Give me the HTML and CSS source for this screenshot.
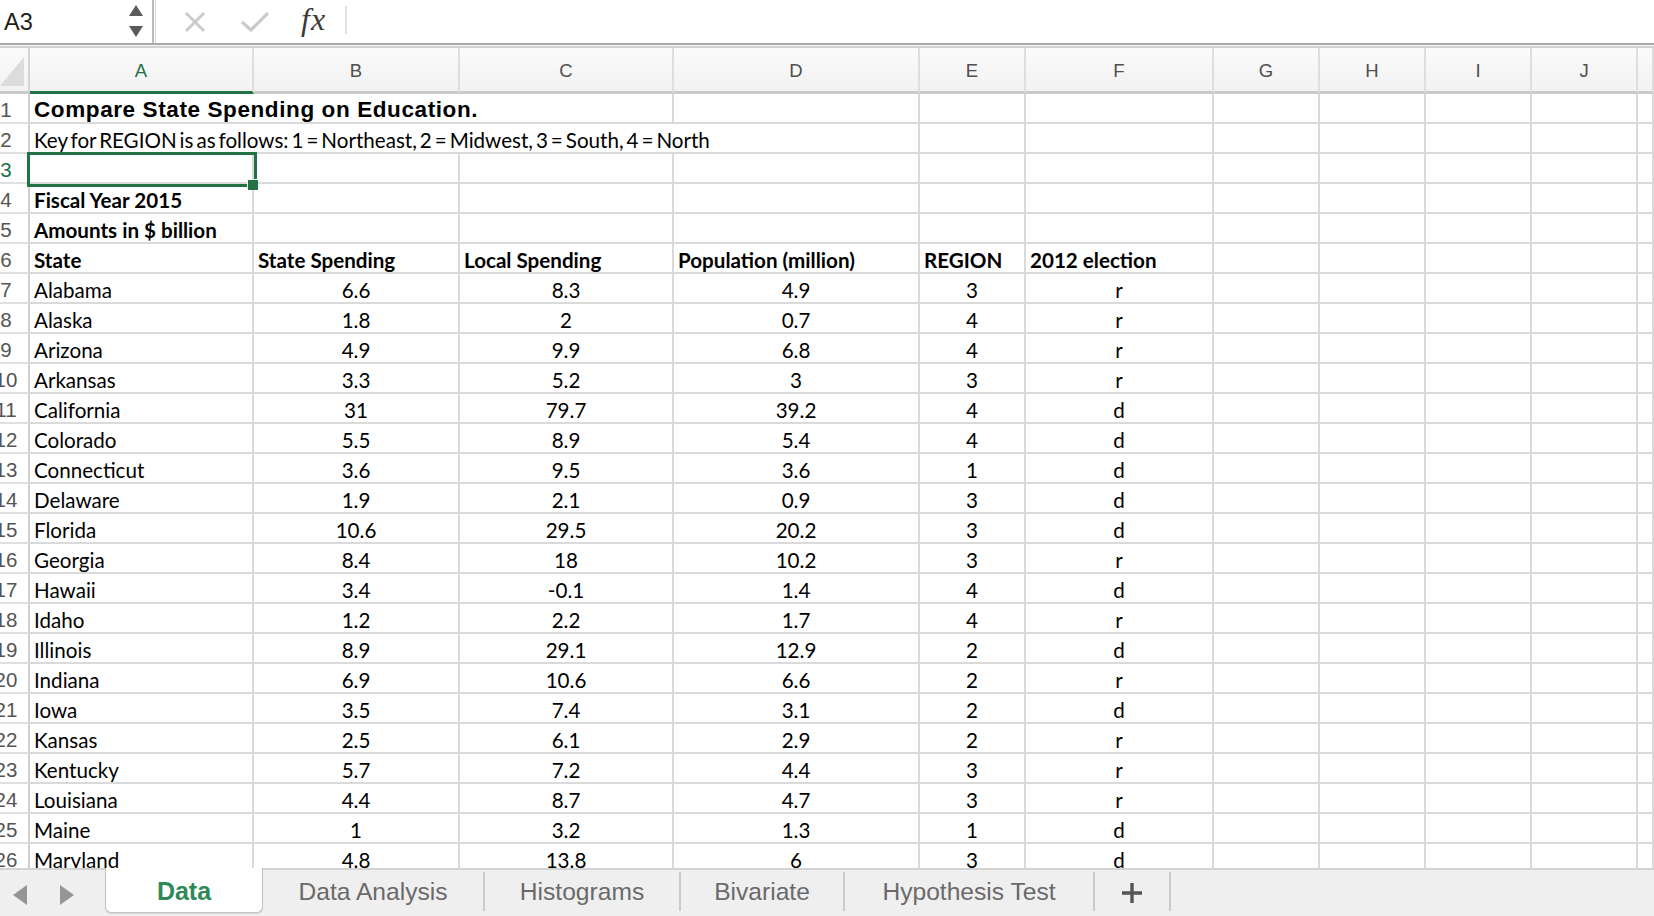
FILE: index.html
```html
<!DOCTYPE html>
<html>
<head>
<meta charset="utf-8">
<title>Compare State Spending on Education</title>
<link rel="stylesheet" href="styles.css">
</head>
<body>
<div class="app">
  <div class="fbar">
    <div class="namebox">
      <span class="ref">A3</span>
      <svg class="spin" width="16" height="34" viewBox="0 0 16 34"><path d="M8 1 L15 12 L1 12 Z" fill="#5a5a5a"/><path d="M1 22 L15 22 L8 33 Z" fill="#5a5a5a"/></svg>
    </div>
    <div class="vsep"></div>
    <div class="ficons">
      <svg class="ico-x" width="22" height="22" viewBox="0 0 22 22"><path d="M2 2 L20 20 M20 2 L2 20" stroke="#cbcbcb" stroke-width="3" fill="none"/></svg>
      <svg class="ico-ok" width="30" height="22" viewBox="0 0 30 22"><path d="M2 11 L11 19 L28 2" stroke="#cbcbcb" stroke-width="3.2" fill="none"/></svg>
      <span class="fx">fx</span>
    </div>
    <div class="fsep"></div>
  </div>
  <div class="fline"></div>
  <div class="sheet">
    <div class="row head">
      <div class="corner"><span class="tri"></span></div>
      <div class="sel">A</div><div>B</div><div>C</div><div>D</div><div>E</div><div>F</div><div>G</div><div>H</div><div>I</div><div>J</div><div></div>
    </div>
    <div class="row"><div class="n"><span>1</span></div><div class="t title span3">Compare State Spending on Education.</div><div></div><div></div><div></div><div></div><div></div><div></div><div></div><div></div></div>
    <div class="row"><div class="n"><span>2</span></div><div class="t key span4">Key for REGION is as follows: 1 = Northeast, 2 = Midwest, 3 = South, 4 = North</div><div></div><div></div><div></div><div></div><div></div><div></div><div></div></div>
    <div class="row"><div class="n cur"><span>3</span></div><div></div><div></div><div></div><div></div><div></div><div></div><div></div><div></div><div></div><div></div><div></div></div>
    <div class="row"><div class="n"><span>4</span></div><div class="t b">Fiscal Year 2015</div><div></div><div></div><div></div><div></div><div></div><div></div><div></div><div></div><div></div><div></div></div>
    <div class="row"><div class="n"><span>5</span></div><div class="t b">Amounts in $ billion</div><div></div><div></div><div></div><div></div><div></div><div></div><div></div><div></div><div></div><div></div></div>
    <div class="row"><div class="n"><span>6</span></div><div class="t b">State</div><div class="t b">State Spending</div><div class="t b">Local Spending</div><div class="t b">Population (million)</div><div class="t b">REGION</div><div class="t b">2012 election</div><div></div><div></div><div></div><div></div><div></div></div>
    <div class="row"><div class="n"><span>7</span></div><div class="t">Alabama</div><div>6.6</div><div>8.3</div><div>4.9</div><div>3</div><div>r</div><div></div><div></div><div></div><div></div><div></div></div>
    <div class="row"><div class="n"><span>8</span></div><div class="t">Alaska</div><div>1.8</div><div>2</div><div>0.7</div><div>4</div><div>r</div><div></div><div></div><div></div><div></div><div></div></div>
    <div class="row"><div class="n"><span>9</span></div><div class="t">Arizona</div><div>4.9</div><div>9.9</div><div>6.8</div><div>4</div><div>r</div><div></div><div></div><div></div><div></div><div></div></div>
    <div class="row"><div class="n"><span>10</span></div><div class="t">Arkansas</div><div>3.3</div><div>5.2</div><div>3</div><div>3</div><div>r</div><div></div><div></div><div></div><div></div><div></div></div>
    <div class="row"><div class="n"><span>11</span></div><div class="t">California</div><div>31</div><div>79.7</div><div>39.2</div><div>4</div><div>d</div><div></div><div></div><div></div><div></div><div></div></div>
    <div class="row"><div class="n"><span>12</span></div><div class="t">Colorado</div><div>5.5</div><div>8.9</div><div>5.4</div><div>4</div><div>d</div><div></div><div></div><div></div><div></div><div></div></div>
    <div class="row"><div class="n"><span>13</span></div><div class="t">Connecticut</div><div>3.6</div><div>9.5</div><div>3.6</div><div>1</div><div>d</div><div></div><div></div><div></div><div></div><div></div></div>
    <div class="row"><div class="n"><span>14</span></div><div class="t">Delaware</div><div>1.9</div><div>2.1</div><div>0.9</div><div>3</div><div>d</div><div></div><div></div><div></div><div></div><div></div></div>
    <div class="row"><div class="n"><span>15</span></div><div class="t">Florida</div><div>10.6</div><div>29.5</div><div>20.2</div><div>3</div><div>d</div><div></div><div></div><div></div><div></div><div></div></div>
    <div class="row"><div class="n"><span>16</span></div><div class="t">Georgia</div><div>8.4</div><div>18</div><div>10.2</div><div>3</div><div>r</div><div></div><div></div><div></div><div></div><div></div></div>
    <div class="row"><div class="n"><span>17</span></div><div class="t">Hawaii</div><div>3.4</div><div>-0.1</div><div>1.4</div><div>4</div><div>d</div><div></div><div></div><div></div><div></div><div></div></div>
    <div class="row"><div class="n"><span>18</span></div><div class="t">Idaho</div><div>1.2</div><div>2.2</div><div>1.7</div><div>4</div><div>r</div><div></div><div></div><div></div><div></div><div></div></div>
    <div class="row"><div class="n"><span>19</span></div><div class="t">Illinois</div><div>8.9</div><div>29.1</div><div>12.9</div><div>2</div><div>d</div><div></div><div></div><div></div><div></div><div></div></div>
    <div class="row"><div class="n"><span>20</span></div><div class="t">Indiana</div><div>6.9</div><div>10.6</div><div>6.6</div><div>2</div><div>r</div><div></div><div></div><div></div><div></div><div></div></div>
    <div class="row"><div class="n"><span>21</span></div><div class="t">Iowa</div><div>3.5</div><div>7.4</div><div>3.1</div><div>2</div><div>d</div><div></div><div></div><div></div><div></div><div></div></div>
    <div class="row"><div class="n"><span>22</span></div><div class="t">Kansas</div><div>2.5</div><div>6.1</div><div>2.9</div><div>2</div><div>r</div><div></div><div></div><div></div><div></div><div></div></div>
    <div class="row"><div class="n"><span>23</span></div><div class="t">Kentucky</div><div>5.7</div><div>7.2</div><div>4.4</div><div>3</div><div>r</div><div></div><div></div><div></div><div></div><div></div></div>
    <div class="row"><div class="n"><span>24</span></div><div class="t">Louisiana</div><div>4.4</div><div>8.7</div><div>4.7</div><div>3</div><div>r</div><div></div><div></div><div></div><div></div><div></div></div>
    <div class="row"><div class="n"><span>25</span></div><div class="t">Maine</div><div>1</div><div>3.2</div><div>1.3</div><div>1</div><div>d</div><div></div><div></div><div></div><div></div><div></div></div>
    <div class="row"><div class="n"><span>26</span></div><div class="t">Maryland</div><div>4.8</div><div>13.8</div><div>6</div><div>3</div><div>d</div><div></div><div></div><div></div><div></div><div></div></div>
    <div class="selection"><span class="handle"></span></div>
  </div>
  <div class="tabs">
    <div class="nav">
      <svg width="16" height="20" viewBox="0 0 16 20"><path d="M15 0 L15 20 L1 10 Z" fill="#959595"/></svg>
      <svg width="16" height="20" viewBox="0 0 16 20"><path d="M1 0 L1 20 L15 10 Z" fill="#959595"/></svg>
    </div>
    <div class="tab active w1">Data</div>
    <div class="tab w2">Data Analysis</div>
    <div class="tab w3">Histograms</div>
    <div class="tab w4">Bivariate</div>
    <div class="tab w5">Hypothesis Test</div>
    <div class="tab add w6"><svg width="22" height="22" viewBox="0 0 22 22"><path d="M11 1 V21 M1 11 H21" stroke="#555" stroke-width="3.4" fill="none"/></svg></div>
  </div>
</div>
</body>
</html>
```

FILE: styles.css
```css
* { box-sizing: border-box; }
html, body { margin: 0; padding: 0; }
body {
  width: 1654px;
  height: 916px;
  overflow: hidden;
  background: #ffffff;
  font-family: "Lato", "Liberation Sans", sans-serif;
  color: #000;
}
.app {
  display: flex;
  flex-direction: column;
  height: 916px;
}

/* formula bar */
.fbar {
  height: 43px;
  display: flex;
  align-items: stretch;
  background: #fff;
}
.namebox {
  width: 152px;
  display: flex;
  align-items: center;
  justify-content: space-between;
  padding: 0 8px 0 4px;
}
.ref {
  font-family: "Liberation Sans", Arial, sans-serif;
  font-size: 23.5px;
  color: #1e1e1e;
  padding-top: 2px;
}
.spin { margin-top: -1px; }
.vsep {
  width: 4px;
  border-left: 2px solid #bdbdbd;
  border-right: 1px solid #dedede;
}
.ficons {
  display: flex;
  align-items: center;
  padding-left: 28px;
  width: 189px;
}
.ico-x { margin-right: 34px; }
.ico-ok { margin-right: 31px; }
.fx {
  font-family: "Liberation Serif", "Times New Roman", serif;
  font-style: italic;
  font-size: 32px;
  color: #3a3a3a;
  margin-top: -5px;
  letter-spacing: 1px;
}
.fsep {
  width: 2px;
  background: #e2e2e2;
  margin: 6px 0 9px;
}
.fline {
  height: 5px;
  border-top: 2px solid #a9a9a9;
  border-bottom: 2px solid #d2d2d2;
  background: #f6f6f6;
}

/* sheet */
.sheet {
  position: relative;
  flex: 1;
  overflow: hidden;
}
.row {
  display: grid;
  grid-template-columns: 30px 224px 206px 214px 246px 106px 188px 106px 106px 106px 106px 1fr;
  height: 30px;
}
.row > div {
  border-right: 2px solid #dadada;
  border-bottom: 2px solid #dadada;
  display: flex;
  align-items: flex-end;
  justify-content: center;
  padding: 0 4px 0;
  white-space: nowrap;
  font-size: 20.6px;
  line-height: 23px;
  min-width: 0;
}
.row > div.t { justify-content: flex-start; }
.row > div.b { font-weight: 700; }
.row > div.span3 { grid-column: span 3; }
.row > div.span4 { grid-column: span 4; }
.row > div.key { word-spacing: -2.3px; }
.row > div.title {
  font-family: "Liberation Sans", Arial, sans-serif;
  font-weight: 700;
  font-size: 22.5px;
  letter-spacing: 0.6px;
  padding-bottom: 1px;
}

/* row numbers */
.row > div.n {
  border-right: 2px solid #cfcfcf;
  border-bottom: 2px solid #e0e0e0;
  padding: 0 0 1px;
  justify-content: flex-start;
  overflow: visible;
}
.n span {
  display: flex;
  justify-content: center;
  width: 12px;
  font-family: "Liberation Sans", Arial, sans-serif;
  font-size: 20.5px;
  color: #555;
}
.n.cur span { color: #217346; }

/* column header */
.row.head {
  height: 46px;
  background: linear-gradient(#fbfbfb, #f1f1f1);
}
.row.head > div {
  border-right: 2px solid #dedede;
  border-bottom: 3px solid #cacaca;
  align-items: center;
  padding: 2px 0 0;
  font-family: "Liberation Sans", Arial, sans-serif;
  font-size: 18.5px;
  color: #4f4f4f;
}
.row.head > div.sel {
  color: #1f7145;
  border-bottom: 3px solid #217346;
}
.row.head > div.corner {
  border-right: 2px solid #d4d4d4;
  align-items: flex-end;
  justify-content: flex-start;
  padding: 0 0 5px;
}
.tri {
  display: block;
  width: 24px;
  height: 29px;
  background: #dcdcdc;
  clip-path: polygon(100% 0, 100% 100%, 0 100%);
}

/* selection */
.selection {
  position: absolute;
  left: 27px;
  top: 104px;
  width: 230px;
  height: 35px;
  border: 3px solid #217346;
}
.handle {
  position: absolute;
  right: -4px;
  bottom: -6px;
  width: 11px;
  height: 11px;
  background: #217346;
  border-left: 1px solid #fff;
  border-top: 1px solid #fff;
}

/* sheet tabs */
.tabs {
  height: 48px;
  display: flex;
  align-items: stretch;
  background: #efefef;
  border-top: 2px solid #d3d3d3;
}
.nav {
  width: 105px;
  display: flex;
  align-items: center;
  padding: 3px 0 0 12px;
  gap: 31px;
}
.tab {
  display: flex;
  align-items: center;
  justify-content: center;
  font-family: "Liberation Sans", Arial, sans-serif;
  font-size: 24.6px;
  color: #6a6a6a;
  margin: 2px 0 5px;
  border-right: 2px solid #cbcbcb;
}
.tab.active {
  background: #fff;
  color: #2e8a55;
  font-weight: 700;
  font-size: 25px;
  margin: -2px 0 3px;
  border: 1px solid #c4c4c4;
  border-top: none;
  border-radius: 0 0 6px 6px;
  box-shadow: 0 1px 1px rgba(0,0,0,0.12);
  padding-top: 3px;
}
.w1 { width: 158px; }
.w2 { width: 222px; }
.w3 { width: 196px; }
.w4 { width: 164px; }
.w5 { width: 250px; }
.w6 { width: 76px; }
.add { padding-top: 2px; }
```
